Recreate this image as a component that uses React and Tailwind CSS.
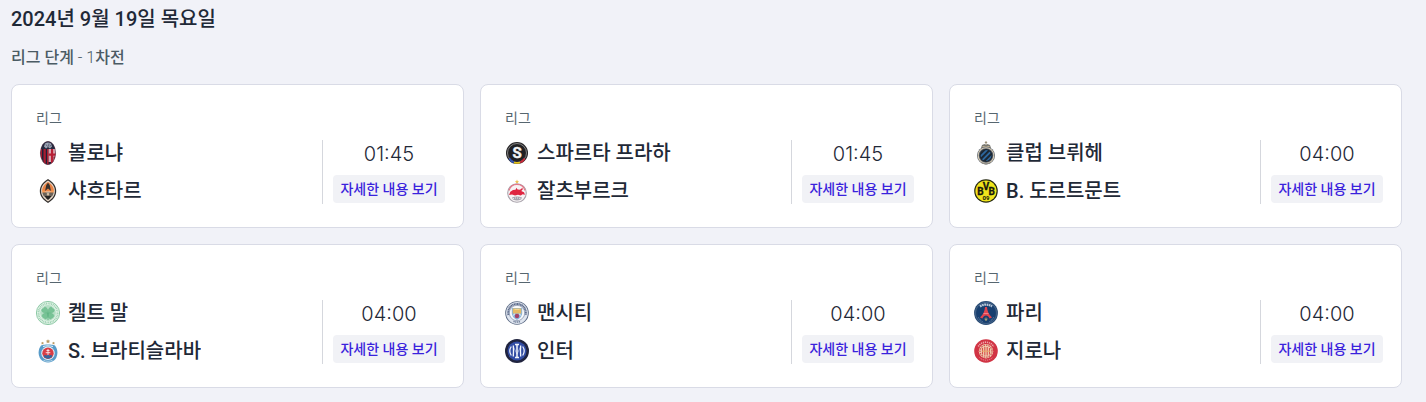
import React from 'react';

const Bologna = () => (
  <>
    <clipPath id="bologna">
      <ellipse cx="12" cy="12" rx="7.6" ry="11.6" />
    </clipPath>
    <g clipPath="url(#bologna)">
      <rect width="24" height="24" fill="#1d2238" />
      <path d="M4 8h2v16H4zM7.5 8h2.300v16H7.500zM11 8h1.600v16H11z" fill="#a81c30" />
      <path d="M12.600 8H20v13h-7.400z" fill="#d9a3ad" />
      <path d="M15 8h2.100v4.500H20v2.200h-2.900V23H15v-8.300h-2.400v-2.200H15z" fill="#b81f35" />
      <path d="M17.500 15.500H20V24h-5l2.500-3z" fill="#8c1d33" />
      <path d="M4 0h16v8H4z" fill="#252a40" />
      <path d="M9 2.500c2-1.500 4-1.500 6 0l1 3-2 2-2-1.500-2 1.500-2-2z" fill="#9da3b2" />
      <path d="M10 3.500l1.500 2M13 2.500l-.5 3M15 4l-1 1.500" stroke="#3c435d" strokeWidth=".7" />
    </g>
    <ellipse cx="12" cy="12" rx="7.600" ry="11.600" fill="none" stroke="#5c3147" strokeWidth=".5" />
  </>
);

const Shakhtar = () => (
  <>
    <path d="M12 0c5 3 8.200 7 8.200 12S17 21 12 24C7 21 3.800 17 3.800 12S7 3 12 0z" fill="#302d2b" />
    <path d="M12 1.500c4.300 2.700 6.900 6 6.900 10.500S16.300 19.800 12 22.500C7.700 19.800 5.100 16.500 5.100 12S7.700 4.200 12 1.500z" fill="#e7d8c9" />
    <path d="M12 3c3.500 2.200 6 5 6 9.500H6C6 8 8.500 5.200 12 3z" fill="#e98345" />
    <path d="M9 12l1.300-6L12 3.800 13.700 6l1.300 6-3-2.500z" fill="#39312c" />
    <path d="M6.200 10.500L11 14H6.500zM17.800 10.500L13 14h4.500z" fill="#f59b55" />
    <path d="M6.300 13.500h11.400c-.3 1.800-1 3-1.700 4H8c-.700-1-1.400-2.200-1.700-4z" fill="#6b6259" />
    <path d="M8.500 17h7c-.8 1.600-2 2.900-3.500 4-1.500-1.100-2.700-2.400-3.500-4z" fill="#262423" />
    <path d="M10.500 15l1.500-1.500 1.500 1.500-1.500 2z" fill="#d7c2a5" />
  </>
);

const Sparta = () => (
  <>
    <circle cx="12" cy="12" r="11" fill="#252426" />
    <circle cx="12" cy="12" r="9.500" fill="none" stroke="#aaa" strokeWidth=".7" />
    <path d="M4.300 17.500A9.800 9.800 0 0 0 8.800 21.400" fill="none" stroke="#3457b8" strokeWidth="2" />
    <path d="M9 21.500A10 10 0 0 0 15 21.500" fill="none" stroke="#e6c51c" strokeWidth="1.800" />
    <path d="M15.200 21.400A9.800 9.800 0 0 0 19.700 17.500" fill="none" stroke="#c72b39" strokeWidth="2" />
    <circle cx="12" cy="11.500" r="7.800" fill="#202023" />
    <text x="12" y="17" textAnchor="middle" fontSize="15" fontWeight="700" fill="#f5f5f5" stroke="#f5f5f5" strokeWidth=".4">S</text>
  </>
);

const Salzburg = () => (
  <>
    <path d="M12 .5l.6 1.400 1.500.1-1.100 1 .3 1.500-1.300-.8-1.300.8.3-1.500-1.100-1 1.500-.1z" fill="#eec35b" />
    <circle cx="12" cy="14" r="9.300" fill="#f7f3f4" stroke="#a7a2ab" strokeWidth="1.100" />
    <path d="M4 11.500a8.300 8.300 0 0 1 16 0" fill="none" stroke="#e77687" strokeWidth="1.200" />
    <path d="M4 16l1.300-3.200L8 11l2.500-.3 1-1.900 1 1.700 2.500.3 2.500-2 .2 1.800-1.500 1.500 2.800 1.200 1 2.500-2.500-.5-1.700 1.200-2.800-.8-3 .7L7 15.500z" fill="#df2541" />
    <path d="M7 18.500c3.500-1.200 6.500-1.200 10 0l-1 2c-3 1.300-5 1.300-8 0z" fill="#a6a3ae" />
    <path d="M8 19.500h1M10 19h1M12 19h1M14 19.300h1.500" stroke="#f8f8f8" strokeWidth=".8" />
  </>
);

const Brugge = () => (
  <>
    <path d="M12 0v5M10.800 1.500h2.400" stroke="#92866e" strokeWidth=".9" />
    <path d="M7 7l1-3 2.500-1L12 4l1.500-1L16 4l1 3-5 1.500z" fill="#7a7972" />
    <path d="M8.500 5.500h7" stroke="#c8b894" strokeWidth=".9" />
    <circle cx="12" cy="14.500" r="9" fill="#59616b" />
    <circle cx="12" cy="14.500" r="7.800" fill="none" stroke="#d8ccb5" strokeWidth="1.100" />
    <circle cx="12" cy="14.500" r="6.500" fill="#1c2733" />
    <clipPath id="brugge">
      <circle cx="12" cy="14.500" r="5.400" />
    </clipPath>
    <path d="M5 17l9-9M6.500 21l11-11M11 22l8-8" stroke="#2d679e" strokeWidth="1.800" clipPath="url(#brugge)" />
    <path d="M7 21.300c3 2 7 2 10 0" fill="none" stroke="#8f8c85" strokeWidth="1.200" />
  </>
);

const Dortmund = () => (
  <>
    <circle cx="12" cy="12" r="11.800" fill="#252810" />
    <circle cx="12" cy="12" r="10.600" fill="#f0e51c" />
    <g fill="#17180c" stroke="#17180c" strokeWidth=".3" fontWeight="700" textAnchor="middle">
      <text x="6.400" y="15.800" fontSize="10">B</text>
      <text x="12" y="10.800" fontSize="10">V</text>
      <text x="17.600" y="15.800" fontSize="10">B</text>
      <text x="12" y="21" fontSize="6" strokeWidth="0">09</text>
    </g>
  </>
);

const Celtic = () => (
  <>
    <circle cx="12" cy="12" r="11.600" fill="#e8f5ec" stroke="#72bd91" strokeWidth=".8" />
    <circle cx="12" cy="12" r="9.500" fill="none" stroke="#9dd2b2" strokeWidth="2" strokeDasharray="1 .7" />
    <circle cx="12" cy="12" r="7.900" fill="#b4dec4" />
    <g fill="#78c396" stroke="#64b687" strokeWidth=".5">
      <path d="M12 12C7 12 5 10.500 6 8.500c.3-1 1.300-1 1.800-.7C7.500 6.500 9 5.700 10 6.500c1.500 1 2 3 2 5.500z" />
      <path d="M12 12c5 0 7-1.500 6-3.500-.3-1-1.300-1-1.800-.7.3-1.300-1.200-2.100-2.200-1.300-1.500 1-2 3-2 5.500z" />
      <path d="M12 12c-5 0-6.500 2-5.500 3.800.4.900 1.300 1 1.800.7-.2 1.300 1.200 1.900 2.100 1.100C11.700 16.600 12 14.500 12 12z" />
      <path d="M12 12c5 0 6.500 2 5.500 3.800-.4.900-1.300 1-1.800.7.200 1.300-1.200 1.900-2.100 1.100C12.300 16.600 12 14.500 12 12z" />
    </g>
    <path d="M12 12v7" stroke="#4eaa76" strokeWidth=".7" />
  </>
);

const Slovan = () => (
  <>
    <path d="M12 .2l.7 1.300 1.500.2-1.100 1 .3 1.500-1.400-.7-1.400.7.3-1.500-1.100-1 1.500-.2zM6.500 2.700l.5.9 1 .2-.7.7.1 1-.9-.4-.9.4.1-1-.7-.7 1-.2zM17.500 2.700l.5.9 1 .2-.7.7.1 1-.9-.4-.9.4.1-1-.7-.7 1-.2z" fill="#b99963" />
    <path d="M5 6.500c4-1.300 10-1.300 14 0 3 4 3.200 9 .5 13.500C16 24.500 8 24.500 4.500 20 1.800 15.500 2 10.500 5 6.500z" fill="#579bc9" />
    <path d="M7 7.500c3-.9 7-.9 10 0" fill="none" stroke="#e5f3fb" strokeWidth="1" />
    <circle cx="12" cy="14.300" r="6.700" fill="#e4eff6" />
    <circle cx="12" cy="14.300" r="5.700" fill="#d83d45" />
    <path d="M12 10v7M10.500 11.500h3M9.700 13.700h4.600" stroke="#fbe6e8" strokeWidth=".9" />
    <path d="M7.500 17c1.300-1.300 2.600-1.300 3.200-.3.900-1.200 1.900-1.200 2.700 0 .8-1 2-1 3.100.3-2.500 3.500-6.500 3.500-9 0z" fill="#35649b" />
    <path d="M7.500 21.300c3 1.300 6 1.300 9 0" fill="none" stroke="#d2e5f0" strokeWidth=".8" />
  </>
);

const ManCity = () => (
  <>
    <circle cx="12" cy="12" r="11.800" fill="#596882" />
    <circle cx="12" cy="12" r="10.900" fill="#dfe5ef" />
    <path d="M3.500 14A8.800 8.800 0 1 1 20.500 14" fill="none" stroke="#5e6c8b" strokeWidth="2" strokeDasharray="1.200 .4" />
    <path d="M8.500 20.300c2.300 1 4.700 1 7 0" fill="none" stroke="#72809a" strokeWidth="1.600" strokeDasharray="1.200 .6" />
    <circle cx="12" cy="12" r="7.700" fill="#fafafb" stroke="#7887a2" strokeWidth=".7" />
    <path d="M6.800 7h10.400v5.500c0 3-2.300 5-5.200 6.500-2.900-1.500-5.200-3.500-5.200-6.500z" fill="#8bb5d8" />
    <path d="M7.800 7.500h8.400v5H7.800z" fill="#e6bb63" />
    <path d="M9.500 8.500h5" stroke="#f6e1a1" strokeWidth=".7" />
    <path d="M7.500 14.800l2.500-2M16.500 14.800l-2.500-2" stroke="#f4f7fa" strokeWidth=".8" />
    <circle cx="12" cy="15" r="2.200" fill="#a64166" />
  </>
);

const Inter = () => (
  <>
    <circle cx="12" cy="12" r="12" fill="#20243f" />
    <circle cx="12" cy="12" r="9.500" fill="#314ca4" />
    <g fill="none" stroke="#f3f6fc">
      <path d="M12 6v12M10 5.500h4M10 18.500h4" strokeWidth="1.500" />
      <path d="M8.300 6.500c.3 4 .3 7 0 11M15.700 6.500c-.3 4-.3 7 0 11" strokeWidth="1.300" />
      <path d="M8.500 8L12 15l3.500-7" strokeWidth=".5" />
      <path d="M6.300 7.500c-2 3-2 6 0 9M17.700 7.500c2 3 2 6 0 9" strokeWidth="1.200" />
    </g>
  </>
);

const Paris = () => (
  <>
    <circle cx="12" cy="12" r="11.900" fill="#274972" />
    <circle cx="12" cy="12" r="10.700" fill="none" stroke="#5c7ca2" strokeWidth=".5" />
    <circle cx="12" cy="12" r="9.700" fill="#173f70" />
    <path d="M6 5.500c3.600-2.600 8.400-2.600 12 0" fill="none" stroke="#b9c8da" strokeWidth="2.200" strokeDasharray="1.800 .5" />
    <path d="M11 6h2c.2 4 1.500 7 5 10.500l-2.400 1c-1-2.100-2-3-3.600-3s-2.600.9-3.600 3L6 16.500C9.500 13 10.800 10 11 6z" fill="#e2444f" />
    <path d="M9.500 12.500h5" stroke="#f39a9f" strokeWidth=".7" />
    <path d="M12 16.500v3M10.500 18c1 0 1.500.5 1.500 1.500 0-1 .5-1.500 1.500-1.500" fill="none" stroke="#cdb977" strokeWidth=".8" />
    <path d="M4.500 16.500c1 1.900 2.200 3.200 4 4M19.500 16.500c-1 1.900-2.200 3.200-4 4" fill="none" stroke="#7590b0" strokeWidth=".9" strokeDasharray="1 .6" />
  </>
);

const Girona = () => (
  <>
    <circle cx="12" cy="12" r="11.800" fill="#d13444" />
    <path d="M4.300 7.500a9 9 0 0 1 15.400 0" fill="none" stroke="#f0a5aa" strokeWidth="1.600" strokeDasharray="1.200 .8" />
    <path d="M5.500 18.500a9.200 9.200 0 0 0 13 0" fill="none" stroke="#eb8e95" strokeWidth="1" strokeDasharray="1.200 .8" />
    <circle cx="12" cy="12.200" r="7.200" fill="#f0cdb0" />
    <circle cx="12" cy="12.200" r="6" fill="none" stroke="#cf5452" strokeWidth="1.300" strokeDasharray="1.500 1" />
    <path d="M8.500 9v6.500M10.800 8v8.500M13.200 8v8.500M15.500 9v6.500" stroke="#d7514c" strokeWidth="1.100" />
    <path d="M8 12.200h8" stroke="#e9ae6b" strokeWidth="1" />
  </>
);

const matches = [
  { time: '01:45', teams: [['볼로냐', Bologna], ['샤흐타르', Shakhtar]] },
  { time: '01:45', teams: [['스파르타 프라하', Sparta], ['잘츠부르크', Salzburg]] },
  { time: '04:00', teams: [['클럽 브뤼헤', Brugge], ['B. 도르트문트', Dortmund]] },
  { time: '04:00', teams: [['켈트 말', Celtic], ['S. 브라티슬라바', Slovan]] },
  { time: '04:00', teams: [['맨시티', ManCity], ['인터', Inter]] },
  { time: '04:00', teams: [['파리', Paris], ['지로나', Girona]] },
];

const Team = ({ name, Crest }) => (
  <li className="flex h-[26px] items-center gap-2">
    <svg viewBox="0 0 24 24" className="h-6 w-6 shrink-0" aria-hidden="true">
      <Crest />
    </svg>
    <span className="truncate text-xl leading-[26px] font-medium text-[#1f2937]">{name}</span>
  </li>
);

const MatchCard = ({ match }) => (
  <article className="rounded-lg border border-[#d9dbe6] bg-white pt-6 pr-[18px] pb-[23px] pl-6">
    <p className="mb-[13px] text-sm leading-[18px] text-[#56666f]">리그</p>
    <div className="flex">
      <ul className="flex min-w-0 flex-1 flex-col gap-3">
        {match.teams.map(([name, Crest]) => (
          <Team key={name} name={name} Crest={Crest} />
        ))}
      </ul>
      <div className="flex h-16 flex-col items-center border-l border-[#d5d7dd] pl-[10px]">
        <time className="mb-[7px] font-['Inter',sans-serif] text-xl leading-7 font-light text-[#1f2937]">
          {match.time}
        </time>
        <button
          type="button"
          className="h-7 w-28 rounded bg-[#f1f2f6] text-sm leading-7 font-medium whitespace-nowrap text-[#3a22dc]"
        >
          자세한 내용 보기
        </button>
      </div>
    </div>
  </article>
);

export default function App() {
  return (
    <main className="min-h-screen bg-[#f1f2f8] pt-1 pr-6 pb-[14px] pl-[11px] font-['Roboto','Noto_Sans_CJK_KR',sans-serif]">
      <h1 className="text-xl leading-[30px] font-medium text-[#1f2937]">2024년 9월 19일 목요일</h1>
      <h2 className="mt-3 mb-[14px] text-base leading-6 font-medium text-[#4b5b64]">
        리그 단계 <span className="font-light">- 1</span>차전
      </h2>
      <div className="grid grid-cols-3 gap-4">
        {matches.map((match) => (
          <MatchCard key={match.teams[0][0]} match={match} />
        ))}
      </div>
    </main>
  );
}
